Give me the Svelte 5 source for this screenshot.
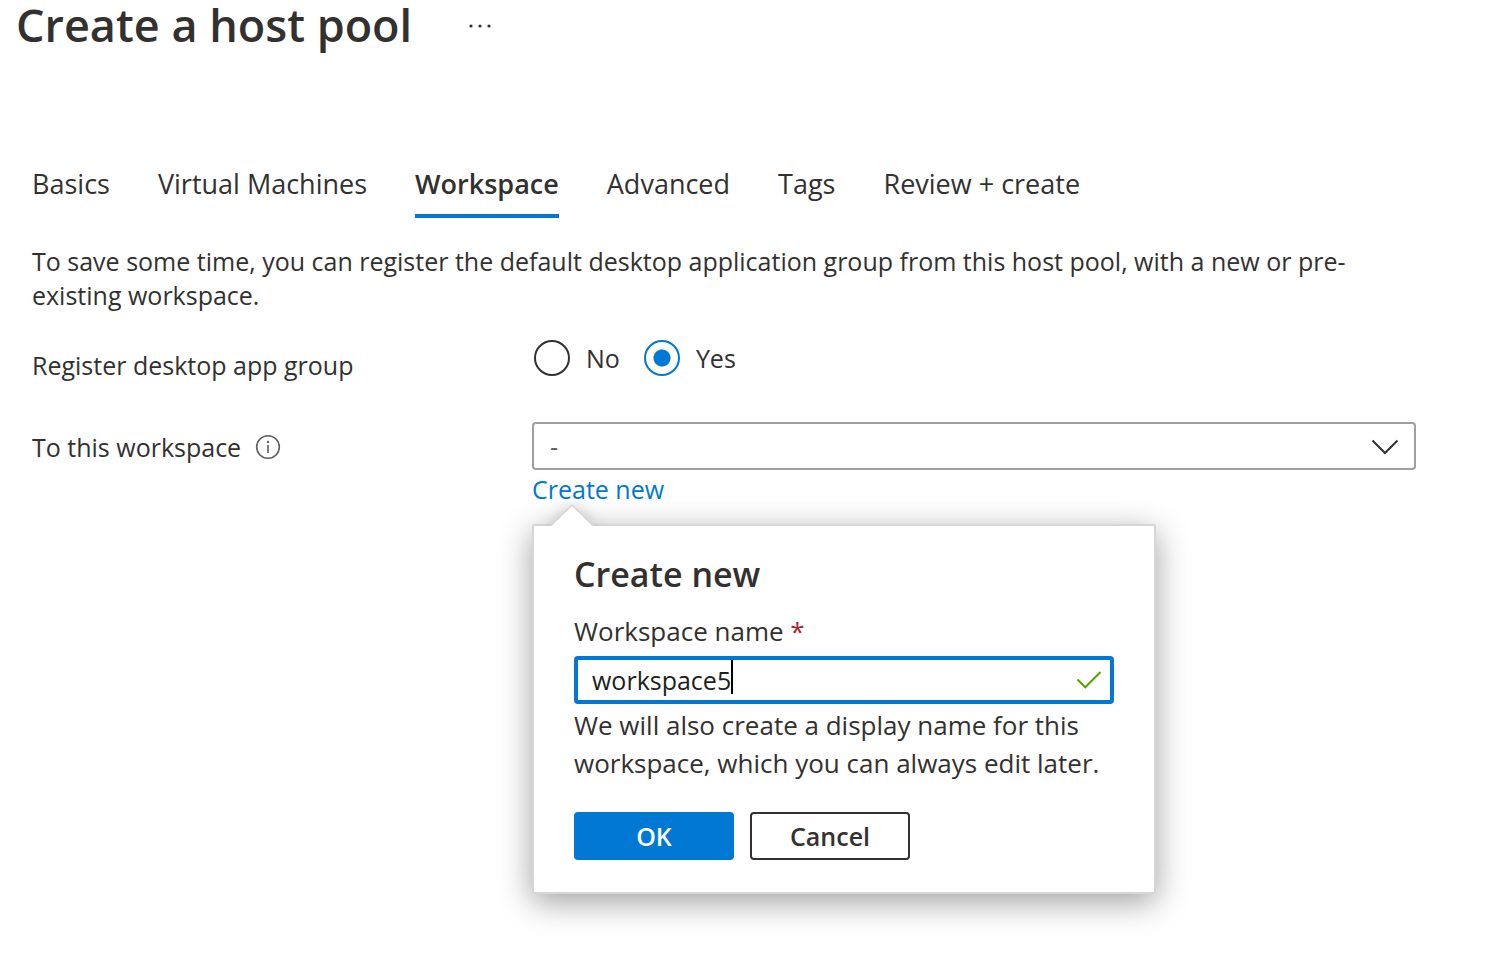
<script>
    import { tick } from "svelte";

    const tabs = ["Basics", "Virtual Machines", "Workspace", "Advanced", "Tags", "Review + create"];

    let activeTab = "Workspace";
    let register = "yes";
    let workspaces = ["-"];
    let selected = "-";
    let open = true;
    let name = "workspace5";
    let nameInput;

    async function toggleCallout() {
        open = !open;
        await tick();
        if (open) nameInput.focus();
    }

    function handleSubmit(event) {
        event.preventDefault();
        if (!name) return;

        workspaces = [...workspaces, name];
        selected = name;
        open = false;
    }
</script>

<header>
    <h1>Create a host pool</h1>
    <button class="more" type="button" aria-label="More actions">
        <svg width="24" height="6" viewBox="0 0 24 6" fill="currentColor">
            <circle cx="3" cy="4" r="1.6" />
            <circle cx="12" cy="4" r="1.6" />
            <circle cx="21" cy="4" r="1.6" />
        </svg>
    </button>
</header>

<main>
    <nav>
        {#each tabs as tab}
            <button type="button" class="tab" class:active={tab === activeTab} on:click={() => (activeTab = tab)}>{tab}</button>
        {/each}
    </nav>

    <p class="intro">To save some time, you can register the default desktop application group from this host pool, with a new or pre-existing workspace.</p>

    <div class="row register">
        <span class="label" id="register-label">Register desktop app group</span>
        <div class="radios" role="radiogroup" aria-labelledby="register-label">
            <label><input type="radio" name="register" value="no" bind:group={register} />No</label>
            <label><input type="radio" name="register" value="yes" bind:group={register} />Yes</label>
        </div>
    </div>

    <div class="row">
        <div class="label with-info">
            <label for="workspace">To this workspace</label>
            <svg width="26" height="26" viewBox="0 0 26 26" fill="none" stroke="#605e5c">
                <circle cx="13" cy="13" r="11.3" stroke-width="1.6" />
                <path d="M13 11v8" stroke-width="1.6" />
                <circle cx="13" cy="8" r="1.2" fill="#605e5c" stroke="none" />
            </svg>
        </div>
        <div class="field">
            <div class="select">
                <select id="workspace" bind:value={selected}>
                    {#each workspaces as workspace}
                        <option>{workspace}</option>
                    {/each}
                </select>
                <svg width="28" height="16" viewBox="0 0 28 16" fill="none" stroke="#323130" stroke-width="2">
                    <path d="M1.5 1.5 14 14 26.5 1.5" />
                </svg>
            </div>
            <div class="anchor">
                <button class="link" type="button" on:click={toggleCallout}>Create new</button>

                {#if open}
                    <form class="callout" on:submit={handleSubmit}>
                        <svg class="beak" width="44" height="22" viewBox="0 0 44 22">
                            <path d="M1 22 22 1 43 22z" fill="#fff" />
                            <path d="M1 21.5 22 1 43 21.5" fill="none" stroke="#d6d6d6" stroke-width="1.5" />
                        </svg>
                        <h2>Create new</h2>
                        <label class="name-label" for="name">Workspace name <span class="required">*</span></label>
                        <div class="textbox">
                            <input id="name" type="text" autocomplete="off" spellcheck="false" bind:this={nameInput} bind:value={name} />
                            <span class="caret"></span>
                            <svg width="26" height="20" viewBox="0 0 26 20" fill="none" stroke="#57a300" stroke-width="2">
                                <path d="M1.5 9.5 9.3 17.3 24.5 2" />
                            </svg>
                        </div>
                        <p class="hint">We will also create a display name for this workspace, which you can always edit later.</p>
                        <div class="actions">
                            <button class="primary" type="submit">OK</button>
                            <button type="button" on:click={() => (open = false)}>Cancel</button>
                        </div>
                    </form>
                {/if}
            </div>
        </div>
    </div>
</main>

<style>
    :global(body) {
        background: #fff;
        color: #323130;
        font-family: "Segoe UI", "Open Sans", "Noto Sans", sans-serif;
        font-size: 25px;
        line-height: 34px;
    }

    button, input, select {
        font: inherit;
        color: inherit;
    }

    button {
        cursor: pointer;
    }

    h1, h2, p {
        margin: 0;
    }

    header {
        display: flex;
        align-items: center;
        gap: 48px;
        padding: 0 16px;
    }

    h1 {
        font-size: 45px;
        line-height: 50px;
        font-weight: 600;
    }

    .more {
        display: flex;
        padding: 8px;
        border: none;
        background: none;
    }

    main {
        box-sizing: border-box;
        min-height: calc(100vh - 50px);
        padding: 114px 92px 64px 32px;
    }

    nav {
        display: flex;
        gap: 48px;
        margin-bottom: 26px;
    }

    .tab {
        padding: 0 0 10px;
        border: none;
        border-bottom: 4px solid transparent;
        background: none;
        font-size: 27px;
        line-height: 40px;
        white-space: nowrap;
    }

    .tab.active {
        border-bottom-color: #0078d4;
        font-weight: 600;
    }

    .intro {
        max-width: 1320px;
    }

    .row {
        display: grid;
        grid-template-columns: 500px 1fr;
    }

    .register {
        margin: 28px 0 40px;
    }

    .label {
        padding-top: 8px;
    }

    .with-info {
        display: flex;
        align-items: center;
        align-self: start;
        gap: 14px;
    }

    .radios {
        display: flex;
        align-items: flex-start;
        gap: 24px;
        padding-left: 2px;
    }

    .radios label {
        display: flex;
        align-items: center;
        gap: 16px;
    }

    .radios input {
        appearance: none;
        width: 36px;
        height: 36px;
        margin: 0;
        border: 2px solid #323130;
        border-radius: 50%;
    }

    .radios input:checked {
        border-color: #0078d4;
        background: radial-gradient(circle, #0078d4 8px, transparent 9px);
    }

    .select {
        position: relative;
    }

    .select select {
        appearance: none;
        display: block;
        width: 100%;
        height: 48px;
        padding: 0 56px 0 16px;
        border: 2px solid #a19f9d;
        border-radius: 4px;
        background: #fff;
        color: #605e5c;
    }

    .select svg {
        position: absolute;
        top: 17px;
        right: 17px;
        pointer-events: none;
    }

    .anchor {
        position: relative;
    }

    .link {
        display: block;
        padding: 2px 0;
        border: none;
        background: none;
        color: #0078d4;
    }

    .callout {
        position: absolute;
        top: 54px;
        left: 0;
        box-sizing: border-box;
        width: 624px;
        padding: 24px 40px 32px;
        border: 2px solid #d6d6d6;
        border-radius: 2px;
        background: #fff;
        box-shadow: 0 8px 32px rgba(0, 0, 0, 0.38);
    }

    .beak {
        position: absolute;
        top: -22px;
        left: 16px;
        filter: drop-shadow(0 2px 8px rgba(0, 0, 0, 0.25));
        clip-path: inset(-30px -30px 0 -30px);
    }

    h2 {
        font-size: 34px;
        line-height: 48px;
        font-weight: 600;
    }

    .name-label, .hint {
        display: block;
        font-size: 26px;
        line-height: 38px;
    }

    .name-label {
        margin: 14px 0 6px;
    }

    .required {
        color: #a4262c;
    }

    .textbox {
        display: flex;
        align-items: center;
        height: 40px;
        padding: 0 8px 0 14px;
        border: 4px solid #0078d4;
        border-radius: 4px;
    }

    .textbox input {
        field-sizing: content;
        padding: 0;
        border: none;
        outline: none;
        background: none;
        color: #201f1e;
        caret-color: transparent;
    }

    .caret {
        align-self: flex-start;
        width: 2px;
        height: 34px;
        background: #000;
    }

    .textbox svg {
        margin-left: auto;
    }

    .hint {
        margin: 2px 0 30px;
    }

    .actions {
        display: flex;
        gap: 16px;
    }

    .actions button {
        min-width: 160px;
        height: 48px;
        padding: 0 38px;
        border: 2px solid #323130;
        border-radius: 4px;
        background: #fff;
        font-weight: 600;
        line-height: 34px;
    }

    .actions .primary {
        border-color: #0078d4;
        background: #0078d4;
        color: #fff;
    }
</style>
